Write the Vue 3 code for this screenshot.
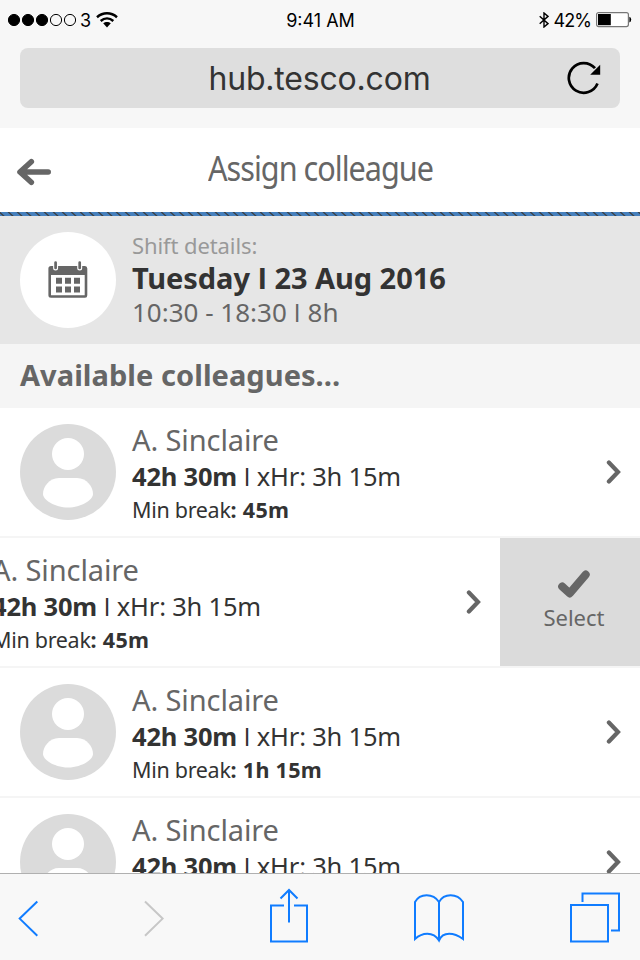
<script setup>
const colleagues = [
  { name: 'A. Sinclaire', hours: '42h 30m', extra: '3h 15m', rest: '45m', open: false },
  { name: 'A. Sinclaire', hours: '42h 30m', extra: '3h 15m', rest: '45m', open: true },
  { name: 'A. Sinclaire', hours: '42h 30m', extra: '3h 15m', rest: '1h 15m', open: false },
  { name: 'A. Sinclaire', hours: '42h 30m', extra: '3h 15m', rest: '45m', open: false },
]
</script>

<template>
  <div class="screen">
    <div class="chrome">
      <div class="status">
        <div class="carrier">
          <svg width="70" height="14" viewBox="0 0 70 14">
            <g stroke="#000" stroke-width="1">
              <circle cx="6" cy="7" r="5.6" /><circle cx="20" cy="7" r="5.6" /><circle cx="34" cy="7" r="5.6" />
              <circle cx="48" cy="7" r="5.6" fill="none" /><circle cx="62" cy="7" r="5.6" fill="none" />
            </g>
          </svg>
          <span class="network">3</span>
          <svg class="wifi" width="22" height="16" viewBox="0 0 22 16">
            <g fill="none" stroke="#000" stroke-width="2.5">
              <path d="M1 5.2C7 0 15 0 21 5.2" /><path d="M4.7 9C8.5 5.6 13.5 5.6 17.3 9" />
            </g>
            <path d="M7.2 11.3C9.4 9.4 12.6 9.4 14.8 11.3L11 15.4Z" />
          </svg>
        </div>
        <span class="clock">9:41 AM</span>
        <div class="power">
          <svg width="10" height="16" viewBox="0 0 10 16" fill="none" stroke="#000" stroke-width="1.4">
            <path d="M.7 4.3L9 11.6L5 15V1L9 4.4L.7 11.7" />
          </svg>
          <span class="percent">42%</span>
          <svg width="36" height="16" viewBox="0 0 36 16">
            <rect x=".6" y=".6" width="31.8" height="14" rx="2" fill="#fff" stroke="#777" stroke-width="1.2" />
            <rect x="2" y="2" width="12.8" height="11.2" /><path d="M33.4 4.8Q35.2 5.2 35.2 7.6T33.4 10.4Z" />
          </svg>
        </div>
      </div>
      <div class="address">
        <span class="url">hub.tesco.com</span>
        <svg class="reload" width="34" height="34" viewBox="0 0 34 34">
          <path d="M30.5 22.6A14.9 14.9 0 1 1 28 7.2" fill="none" stroke="#000" stroke-width="2.7" />
          <path d="M33.2 3.8V13.8H23.2Z" />
        </svg>
      </div>
    </div>

    <header class="titlebar">
      <svg class="back" width="34" height="28" viewBox="0 0 34 28" fill="none" stroke="#666" stroke-width="5.6" stroke-linecap="round" stroke-linejoin="round">
        <path d="M31.2 14H4M14.3 3.7L3 14L14.3 24.3" />
      </svg>
      <h1>Assign colleague</h1>
    </header>
    <svg class="stripes" width="640" height="4">
      <defs>
        <pattern id="hatch" width="9" height="4" patternUnits="userSpaceOnUse">
          <rect width="9" height="4" fill="#4680bd" />
          <path d="M-1.2 -.5L4.4 4.5M7.8 -.5L13.4 4.5" stroke="#3c4043" stroke-width="1.3" />
        </pattern>
      </defs>
      <rect width="640" height="4" fill="url(#hatch)" />
    </svg>

    <section class="shift">
      <div class="calendar">
        <svg width="40" height="38" viewBox="0 0 40 38">
          <path fill="#666" fill-rule="evenodd" d="M3 5H37Q39.3 5 39.3 7.5V34.3Q39.3 36.8 37 36.8H3Q.4 36.8 .4 34.3V7.5Q.4 5 3 5ZM3 14V34.2H36.7V14Z" />
          <g stroke-linecap="round">
            <path d="M7.6 2V7M31.7 2V7" stroke="#fff" stroke-width="5" />
            <path d="M7.6 1.5V7M31.7 1.5V7" stroke="#666" stroke-width="2.7" />
          </g>
          <path fill="#666" d="M8 16.7h6v6H8zM17 16.7h6v6h-6zM26 16.7h6v6h-6zM8 25.5h6v6H8zM17 25.5h6v6h-6zM26 25.5h6v6h-6z" />
        </svg>
      </div>
      <div>
        <div class="caption">Shift details:</div>
        <div class="date">Tuesday <i>I</i> 23 Aug 2016</div>
        <div class="time">10:30 - 18:30 <i>I</i> 8h</div>
      </div>
    </section>

    <h2>Available colleagues…</h2>

    <main class="list">
      <div v-for="(c, n) in colleagues" :key="n" class="row" :class="{ open: c.open }">
        <div class="card">
          <svg class="avatar" width="96" height="96" viewBox="0 0 96 96">
            <circle cx="48" cy="48" r="48" fill="#dbdbdb" />
            <circle cx="48" cy="30" r="16" fill="#fff" />
            <path fill="#fff" d="M39 54H57C67 54 73 63 73 70C73 76 61 83.5 48 83.5S23 76 23 70C23 63 29 54 39 54Z" />
          </svg>
          <div class="info">
            <div class="name">{{ c.name }}</div>
            <div class="hours"><b>{{ c.hours }}</b> <i>I</i> xHr: {{ c.extra }}</div>
            <div class="break">Min break<b>: {{ c.rest }}</b></div>
          </div>
          <svg class="chevron" width="15" height="24" viewBox="0 0 15 24" fill="none" stroke="#666" stroke-width="4.2" stroke-linecap="round" stroke-linejoin="miter">
            <path d="M2.9 2.5L12 12L2.9 21.5" />
          </svg>
        </div>
        <div v-if="c.open" class="select">
          <svg width="32" height="28" viewBox="0 0 32 28" fill="none" stroke="#666" stroke-width="8" stroke-linecap="round" stroke-linejoin="round">
            <path d="M4.2 16.5L11.7 23.4L27.7 4.6" />
          </svg>
          <span>Select</span>
        </div>
      </div>
    </main>

    <nav class="toolbar">
      <svg width="640" height="86" viewBox="0 874 640 86" fill="none" stroke="#107cff" stroke-width="2">
        <path d="M37.3 901.5L19.7 918.6L37.3 935.8" />
        <path d="M145 901.5L162.6 918.6L145 935.8" stroke="#c7c7c7" />
        <path d="M284 905.5H271V941.5H307V905.5H294M289 922.5V890.5M280.5 898.5L289 890L297.5 898.5" />
        <path d="M439 940.5V902C433 893 420 893 415 902V939C422 932.5 433 931 439 940.5C443 931 454 932.5 463 939V902C457 893 444 893 439 902" />
        <path d="M571 905H608V941.5H571ZM582.5 902V893.5H619V930.5H611" />
      </svg>
    </nav>
  </div>
</template>

<style>
body { margin: 0; }
</style>

<style scoped>
.screen {
  width: 640px;
  height: 960px;
  display: flex;
  flex-direction: column;
  overflow: hidden;
  background: #fff;
  color: #333;
  font-family: "Noto Sans", sans-serif;
  white-space: nowrap;
}
svg { display: block; flex: none; }
i { font-family: "Open Sans", sans-serif; font-style: normal; line-height: 1; }
.chrome {
  height: 128px;
  flex: none;
  background: #f7f7f7;
  font-family: Inter, sans-serif;
}
.status {
  display: grid;
  grid-template-columns: 1fr auto 1fr;
  align-items: center;
  height: 40px;
  padding: 0 8px;
  margin-bottom: 8px;
  color: #000;
  font-size: 18px;
}
.carrier, .power { display: flex; align-items: center; }
.network { margin-left: 2px; font-size: 18px; }
.wifi { margin-left: 5px; }
.clock { padding-left: 1px; }
.power { justify-content: flex-end; }
.percent { margin: 0 5px 0 4px; letter-spacing: -0.9px; }
.address {
  display: flex;
  align-items: center;
  justify-content: flex-end;
  box-sizing: border-box;
  height: 60px;
  margin: 0 20px;
  padding-right: 19px;
  border-radius: 8px;
  background: #dedede;
}
.url { flex: 1; padding: 2px 0 0 52px; text-align: center; font-size: 32px; line-height: 62px; letter-spacing: -0.2px; }
.titlebar { display: flex; height: 84px; flex: none; }
.back { margin: 30px 0 0 17px; }
h1 {
  margin: 0 0 0 157px;
  font-size: 34px;
  font-weight: 400;
  line-height: 80px;
  letter-spacing: -1.1px;
  color: #666;
  transform: scaleX(0.9);
  transform-origin: left;
}
.shift {
  display: flex;
  gap: 16px;
  box-sizing: border-box;
  height: 128px;
  flex: none;
  padding: 12px 20px 0;
  background: #e6e6e6;
}
.calendar {
  display: flex;
  align-items: center;
  justify-content: center;
  width: 96px;
  height: 96px;
  margin-top: 4px;
  border-radius: 50%;
  background: #fff;
}
.caption { font-size: 22px; line-height: 34px; letter-spacing: -0.1px; color: #999; }
.date { font-size: 29px; line-height: 31px; font-weight: 700; letter-spacing: -0.05px; }
.time { font-size: 26px; line-height: 38px; color: #666; }
h2 {
  box-sizing: border-box;
  height: 64px;
  flex: none;
  margin: 0;
  padding-left: 20px;
  background: #f5f5f5;
  color: #666;
  font-size: 29px;
  line-height: 62px;
  letter-spacing: 0.05px;
}
.list { flex: 1; min-height: 0; overflow: hidden; }
.row { display: flex; height: 128px; border-bottom: 2px solid #f5f5f5; overflow: hidden; }
.card { display: flex; flex: none; box-sizing: border-box; width: 640px; padding: 0 19px 0 20px; }
.open .card { margin-left: -140px; }
.avatar { margin: 16px 16px 0 0; }
.info { flex: 1; padding-top: 13px; }
.name { font-size: 29px; line-height: 37px; letter-spacing: -0.1px; color: #666; }
.hours { font-size: 25.5px; line-height: 36px; letter-spacing: -0.2px; }
.break { font-size: 21.5px; line-height: 32px; letter-spacing: -0.3px; }
.break b { letter-spacing: 0.3px; }
.chevron { margin-top: 52px; }
.select {
  display: flex;
  flex-direction: column;
  align-items: center;
  box-sizing: border-box;
  width: 140px;
  height: 128px;
  padding: 32px 0 0 8px;
  background: #dbdbdb;
  color: #666;
}
.select span { margin-top: 3px; font-size: 22px; line-height: 33px; }
.toolbar { flex: none; height: 86px; border-top: 1px solid #b0b0b0; background: #f8f8f8; }
</style>
